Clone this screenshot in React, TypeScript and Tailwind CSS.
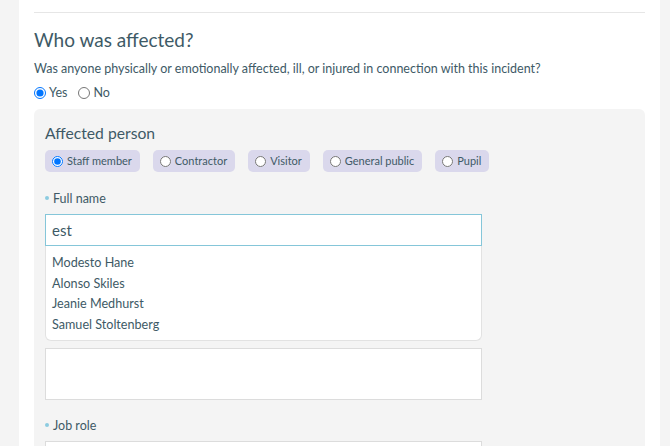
import React, { useState } from "react";

const types = ["Staff member", "Contractor", "Visitor", "General public", "Pupil"];
const people = ["Modesto Hane", "Alonso Skiles", "Jeanie Medhurst", "Samuel Stoltenberg"];

const App = () => {
  const [affected, setAffected] = useState("yes");
  const [type, setType] = useState("Staff member");
  const [name, setName] = useState("est");

  return (
    <div className="min-h-screen bg-[#f4f4f4] pl-[19px] pr-[10px] font-['Lato',sans-serif] text-[#3e5a66]">
      <div className="min-h-[446px] bg-white px-[15px] pt-3">
        <div className="border-t border-[#e6e6e6]" />

        <h2 className="mt-[15px] text-[19px] leading-[24px]">Who was affected?</h2>
        <p className="mt-[8px] text-[12.5px] leading-[18px]">
          Was anyone physically or emotionally affected, ill, or injured in connection with this incident?
        </p>

        <div className="mt-[6px] flex items-center gap-[11px] text-[12.5px] leading-[18px]">
          <label className="flex items-center gap-[3px]">
            <input
              type="radio"
              name="affected"
              checked={affected === "yes"}
              onChange={() => setAffected("yes")}
              className="m-0 h-[12px] w-[12px]"
            />
            Yes
          </label>
          <label className="flex items-center gap-[3px]">
            <input
              type="radio"
              name="affected"
              checked={affected === "no"}
              onChange={() => setAffected("no")}
              className="m-0 h-[12px] w-[12px]"
            />
            No
          </label>
        </div>

        <div className="mt-[7px] rounded-t-[6px] bg-[#f4f4f4] px-[11px] pb-6 pt-[14px]">
          <h3 className="text-[15.7px] leading-[20px]">Affected person</h3>

          <div className="mt-[7px] flex gap-[13px]">
            {types.map((t) => (
              <label
                key={t}
                className="flex h-[22px] items-center gap-[4px] rounded-[5px] bg-[#dad8ec] pl-[7px] pr-[8px] text-[11px]"
              >
                <input
                  type="radio"
                  name="type"
                  checked={type === t}
                  onChange={() => setType(t)}
                  className="m-0 h-[11px] w-[11px]"
                />
                {t}
              </label>
            ))}
          </div>

          <div className="mt-[18px] flex items-center gap-[4px] text-[12.5px] leading-[18px]">
            <span className="mt-[-2px] h-[4px] w-[4px] rounded-full bg-[#8ccbe0]" />
            Full name
          </div>

          <div className="mt-[6px] w-[437px]">
            <input
              value={name}
              onChange={(e) => setName(e.target.value)}
              className="block h-[32px] w-full border border-[#85c6d9] bg-white px-[6px] text-[15px] text-[#3e5a66] outline-none"
            />
            <ul className="rounded-b-[6px] border border-t-0 border-[#e2e2e2] bg-white px-[6px] pb-[4px] pt-[7px] text-[12.6px] leading-[20.7px]">
              {people.map((p) => (
                <li key={p}>{p}</li>
              ))}
            </ul>
          </div>

          <textarea className="mt-[7px] block h-[52px] w-[437px] resize-none border border-[#dcdcdc] bg-white outline-none" />

          <div className="mt-[17px] flex items-center gap-[4px] text-[12.5px] leading-[18px]">
            <span className="mt-[-2px] h-[4px] w-[4px] rounded-full bg-[#8ccbe0]" />
            Job role
          </div>

          <input className="mt-[6px] block h-[33px] w-[437px] border border-[#dcdcdc] bg-white outline-none" />
        </div>
      </div>
    </div>
  );
};

export default App;
